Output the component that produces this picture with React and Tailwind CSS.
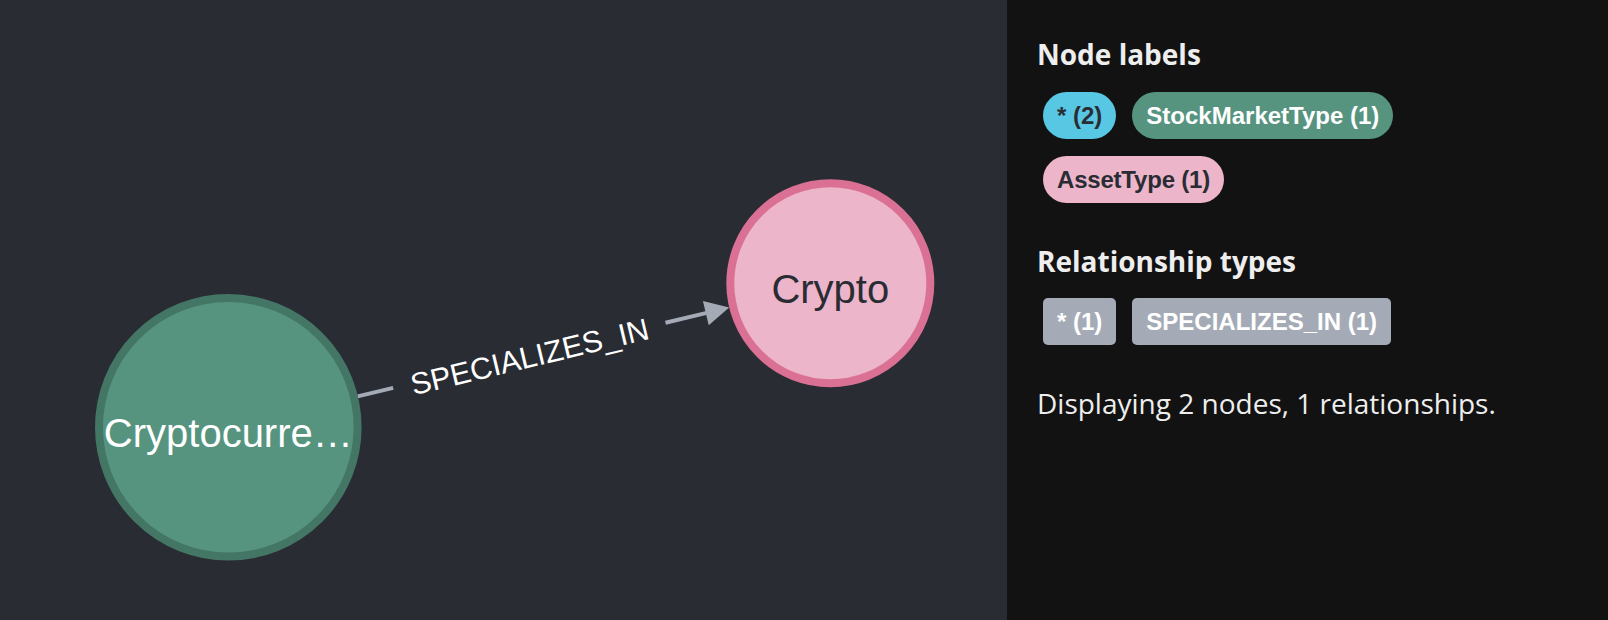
import React from "react";

const GX = 228.3;
const GY = 427.3;
const PX = 830.3;
const PY = 283.3;
const ANGLE = (Math.atan2(PY - GY, PX - GX) * 180) / Math.PI;

function Graph() {
  return (
    <div className="w-[1007px] h-full bg-[#292c33] shrink-0">
      <svg width="1007" height="620" viewBox="0 0 1007 620">
        <g transform={`translate(${GX} ${GY}) rotate(${ANGLE})`}>
          <line x1="133" y1="0" x2="169.5" y2="0" stroke="#a5abb6" strokeWidth="4" />
          <line x1="449.5" y1="0" x2="492" y2="0" stroke="#a5abb6" strokeWidth="4" />
          <polygon points="491,-12.5 515,0 491,12.5" fill="#a5abb6" />
          <text
            x="309.5"
            y="12"
            textAnchor="middle"
            fill="#ffffff"
            fontSize="30.5"
            fontFamily="'Liberation Sans', Arial, sans-serif"
          >
            SPECIALIZES_IN
          </text>
        </g>
        <circle cx={GX} cy={GY} r="129.3" fill="#569480" stroke="#447666" strokeWidth="8" />
        <text
          x={GX}
          y={GY + 19.5}
          textAnchor="middle"
          fill="#ffffff"
          fontSize="40"
          fontFamily="'Liberation Sans', Arial, sans-serif"
        >
          Cryptocurre…
        </text>
        <circle cx={PX} cy={PY} r="100" fill="#ecb5c9" stroke="#da7194" strokeWidth="8" />
        <text
          x={PX}
          y={PY + 20}
          textAnchor="middle"
          fill="#2a2c34"
          fontSize="40"
          fontFamily="'Liberation Sans', Arial, sans-serif"
        >
          Crypto
        </text>
      </svg>
    </div>
  );
}

function Pill({ children, className }) {
  return (
    <span
      className={
        "inline-flex h-[47px] items-center px-[14px] text-[24px] font-bold font-['Liberation_Sans',Arial,sans-serif] whitespace-nowrap " +
        className
      }
    >
      {children}
    </span>
  );
}

function Sidebar() {
  return (
    <div className="flex-1 h-full bg-[#121212] pl-[30px] pt-[36px] font-['Open_Sans','Noto_Sans',sans-serif]">
      <h4 className="text-[28px] leading-[36px] font-bold text-[#eeeeee]">Node labels</h4>
      <div className="mt-[20px] ml-[6px] flex w-[400px] flex-wrap gap-x-4 gap-y-[17px]">
        <Pill className="rounded-full bg-[#57c7e3] text-[#2a2c34]">* (2)</Pill>
        <Pill className="rounded-full bg-[#569480] text-white">StockMarketType (1)</Pill>
        <Pill className="rounded-full bg-[#ecb5c9] text-[#2a2c34] tracking-[-0.2px]">AssetType (1)</Pill>
      </div>
      <h4 className="mt-[40px] text-[28px] leading-[36px] font-bold text-[#eeeeee]">Relationship types</h4>
      <div className="mt-[19px] ml-[6px] flex flex-wrap gap-x-4">
        <Pill className="rounded-[5px] bg-[#a5abb6] text-white">* (1)</Pill>
        <Pill className="rounded-[5px] bg-[#a5abb6] text-white">SPECIALIZES_IN (1)</Pill>
      </div>
      <p className="mt-[38px] text-[28px] leading-[40px] text-[#eeeeee]">
        Displaying 2 nodes, 1 relationships.
      </p>
    </div>
  );
}

export default function App() {
  return (
    <div className="flex w-[1608px] h-[620px] overflow-hidden">
      <Graph />
      <Sidebar />
    </div>
  );
}
